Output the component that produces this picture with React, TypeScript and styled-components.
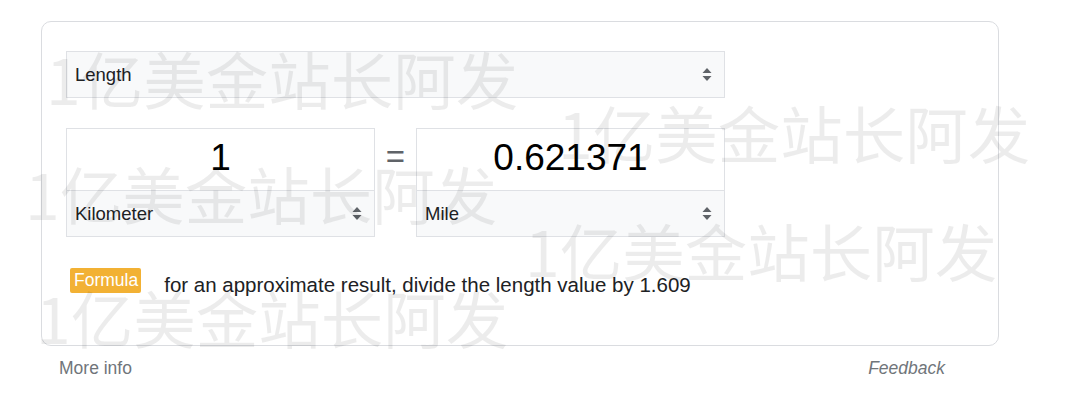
import styled, { createGlobalStyle } from "styled-components";

const GlobalStyle = createGlobalStyle`
  html, body {
    margin: 0;
    padding: 0;
    background: #fff;
  }
  body {
    font-family: "Liberation Sans", Arial, sans-serif;
    color: #202124;
  }
`;

const Page = styled.div`
  position: relative;
  width: 1080px;
  height: 397px;
  padding: 21px 0 0 41px;
  box-sizing: border-box;
  overflow: hidden;
`;

const Card = styled.div`
  width: 958px;
  height: 325px;
  box-sizing: border-box;
  border: 1px solid #dadce0;
  border-radius: 10px;
  padding: 29px 24px 0;
  display: flex;
  flex-direction: column;
`;

const SelectBox = styled.div<{ $height: number; $width?: number }>`
  display: flex;
  align-items: center;
  justify-content: space-between;
  box-sizing: border-box;
  width: ${({ $width }) => ($width ? `${$width}px` : "100%")};
  height: ${({ $height }) => $height}px;
  padding: 0 12px 0 8px;
  background: #f8f9fa;
  border: 1px solid #dfe1e5;
  font-size: 18.5px;
  color: #202124;
`;

const UnitRow = styled.div`
  display: flex;
  align-items: flex-start;
  margin-top: 30px;
  width: 659px;
`;

const UnitBox = styled.div`
  display: flex;
  flex-direction: column;
  width: 309px;
  height: 109px;
  box-sizing: border-box;
  border: 1px solid #dfe1e5;
`;

const ValueInput = styled.div`
  height: 62px;
  display: flex;
  align-items: center;
  justify-content: center;
  padding-bottom: 3px;
  box-sizing: border-box;
  background: #fff;
  font-size: 37px;
  color: #000;
  border-bottom: 1px solid #dfe1e5;
`;

const UnitSelect = styled.div`
  flex: 1;
  display: flex;
  align-items: center;
  justify-content: space-between;
  padding: 0 12px 0 8px;
  background: #f8f9fa;
  font-size: 18.5px;
  color: #202124;
`;

const Equals = styled.div`
  width: 41px;
  height: 62px;
  display: flex;
  align-items: center;
  justify-content: center;
  font-size: 33px;
  color: #5f6368;
  padding-bottom: 4px;
  box-sizing: border-box;
`;

const FormulaRow = styled.div`
  display: flex;
  align-items: flex-start;
  margin-top: 31px;
  padding-left: 4px;
`;

const Badge = styled.span`
  display: inline-flex;
  align-items: center;
  height: 25px;
  padding: 0 3px 0 4px;
  background: #f2b134;
  color: #fff;
  font-size: 17.5px;
  border-radius: 2px;
`;

const FormulaText = styled.span`
  margin: 5px 0 0 23px;
  font-size: 20.5px;
  color: #202124;
`;

const Footer = styled.div`
  display: flex;
  justify-content: space-between;
  width: 958px;
  box-sizing: border-box;
  padding: 12px 54px 0 18px;
  font-size: 17.5px;
  color: #70757a;
`;

const FooterLink = styled.span<{ $italic?: boolean }>`
  font-style: ${({ $italic }) => ($italic ? "italic" : "normal")};
`;

const Watermark = styled.div<{ $x: number; $y: number }>`
  position: absolute;
  left: ${({ $x }) => $x}px;
  top: ${({ $y }) => $y}px;
  font-family: "Noto Sans CJK SC", sans-serif;
  font-size: 62.5px;
  line-height: 1;
  white-space: nowrap;
  color: rgba(0, 0, 0, 0.075);
  pointer-events: none;
`;

function SortArrows() {
  return (
    <svg width="10" height="15" viewBox="0 0 10 15">
      <path d="M5 1 L9.5 6 L0.5 6 Z" fill="#5f6368" />
      <path d="M0.5 9 L9.5 9 L5 14 Z" fill="#5f6368" />
    </svg>
  );
}

const marks = [
  { x: 46, y: 47 },
  { x: 558, y: 101 },
  { x: 25, y: 162 },
  { x: 525, y: 219 },
  { x: 36, y: 286 },
];

export default function App() {
  return (
    <>
      <GlobalStyle />
      <Page>
        <Card>
          <SelectBox $height={47} $width={659}>
            <span>Length</span>
            <SortArrows />
          </SelectBox>
          <UnitRow>
            <UnitBox>
              <ValueInput>1</ValueInput>
              <UnitSelect>
                <span>Kilometer</span>
                <SortArrows />
              </UnitSelect>
            </UnitBox>
            <Equals>=</Equals>
            <UnitBox>
              <ValueInput>0.621371</ValueInput>
              <UnitSelect>
                <span>Mile</span>
                <SortArrows />
              </UnitSelect>
            </UnitBox>
          </UnitRow>
          <FormulaRow>
            <Badge>Formula</Badge>
            <FormulaText>
              for an approximate result, divide the length value by 1.609
            </FormulaText>
          </FormulaRow>
        </Card>
        <Footer>
          <FooterLink>More info</FooterLink>
          <FooterLink $italic>Feedback</FooterLink>
        </Footer>
        {marks.map((m, i) => (
          <Watermark key={i} $x={m.x} $y={m.y}>
            1亿美金站长阿发
          </Watermark>
        ))}
      </Page>
    </>
  );
}
